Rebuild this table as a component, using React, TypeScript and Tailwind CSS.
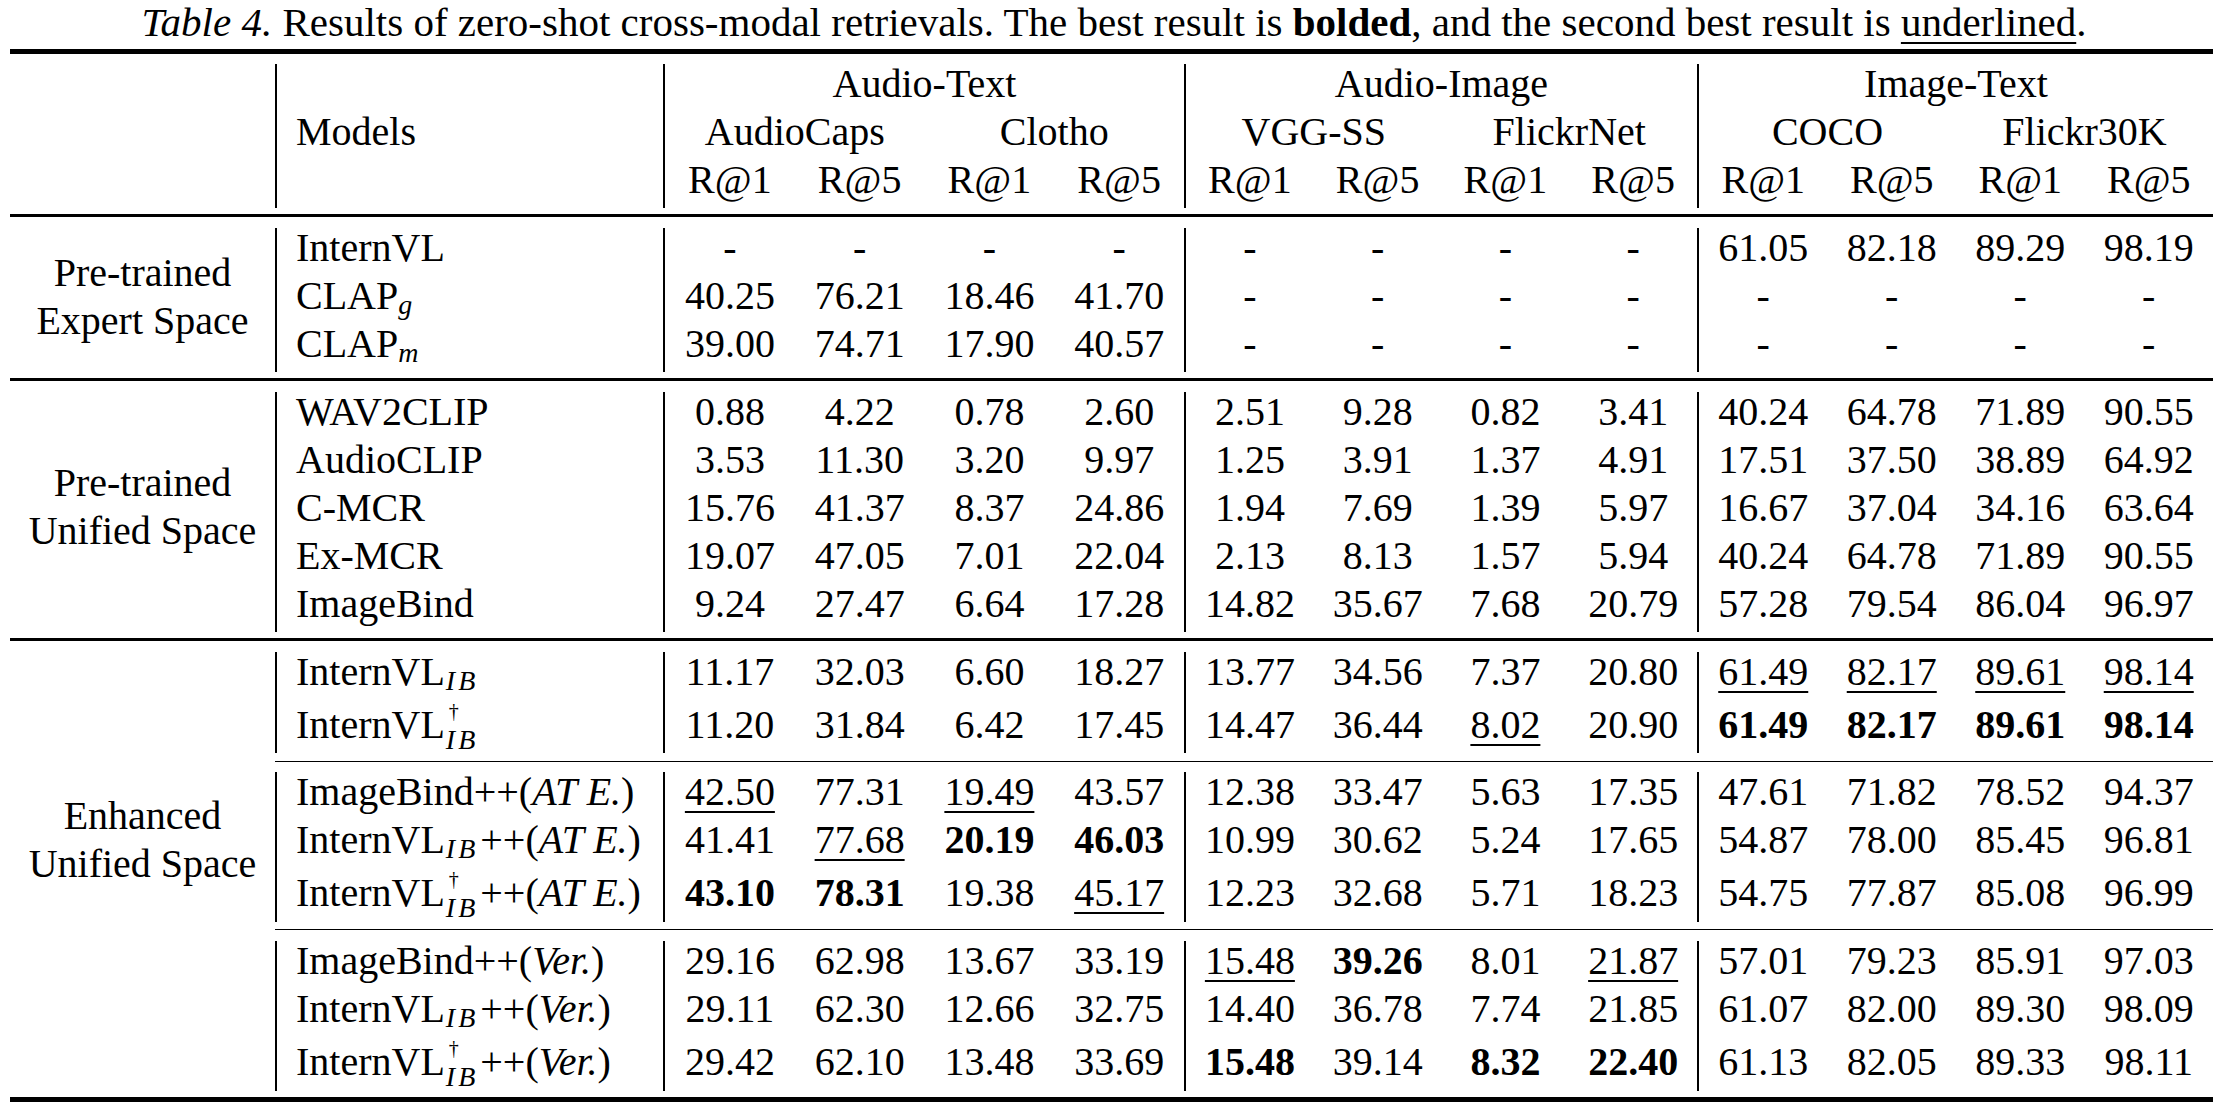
import React from 'react';

// widths of the three metric groups (Audio-Text, Audio-Image, Image-Text)
const groupWidths = ['w-[519px]', 'w-[511px]', 'w-[514px]'];
const gridCols: Record<number, string> = { 1: 'grid-cols-1', 2: 'grid-cols-2', 4: 'grid-cols-4' };

const VLine = () => <div className="w-[2px] shrink-0 self-stretch bg-black" />;

// math-style subscript, optionally with a dagger stacked above it
function Sub({ t, dag }: { t: string; dag?: boolean }) {
  const wide = t === 'IB' ? 'tracking-[3px] pl-[1px] pr-[2px]' : '';
  return (
    <span className={`relative italic text-[28px] ${wide} ${dag ? 'top-[11px]' : 'top-[5px]'}`}>
      {dag && <span className="absolute left-[4px] top-[-23px] not-italic text-[20px] leading-none">†</span>}
      {t}
    </span>
  );
}

function Val({ v }: { v: string }) {
  if (v.startsWith('*')) return <span className="font-bold">{v.slice(1)}</span>;
  if (v.startsWith('_'))
    return <span className="underline decoration-[1.5px] underline-offset-[6px]">{v.slice(1)}</span>;
  return <span>{v}</span>;
}

function Row({
  h,
  pad = '',
  models,
  groups,
}: {
  h: string;
  pad?: string;
  models: React.ReactNode;
  groups: React.ReactNode[][];
}) {
  return (
    <div className={`flex ${h}`}>
      <VLine />
      <div className={`w-[386px] shrink-0 pl-[19px] whitespace-nowrap ${pad}`}>{models}</div>
      {groups.map((g, i) => (
        <React.Fragment key={i}>
          <VLine />
          <div className={`grid shrink-0 ${gridCols[g.length]} ${groupWidths[i]} ${pad}`}>
            {g.map((c, j) => (
              <div key={j} className="text-center whitespace-nowrap">
                {c}
              </div>
            ))}
          </div>
        </React.Fragment>
      ))}
    </div>
  );
}

type DataRow = { name: React.ReactNode; vals: string[]; dag?: boolean };

function DataRows({ rows, dagH = 'h-[54px]' }: { rows: DataRow[]; dagH?: string }) {
  return (
    <div className="flex flex-col">
      {rows.map((r, i) => (
        <Row
          key={i}
          h={r.dag ? dagH : 'h-[48px]'}
          pad={r.dag ? 'pt-[5px]' : ''}
          models={r.name}
          groups={[0, 1, 2].map((g) => r.vals.slice(g * 4, g * 4 + 4).map((v, k) => <Val key={k} v={v} />))}
        />
      ))}
    </div>
  );
}

const D = ['-', '-', '-', '-'];

const expert: DataRow[] = [
  { name: 'InternVL', vals: [...D, ...D, '61.05', '82.18', '89.29', '98.19'] },
  { name: <>CLAP<Sub t="g" /></>, vals: ['40.25', '76.21', '18.46', '41.70', ...D, ...D] },
  { name: <>CLAP<Sub t="m" /></>, vals: ['39.00', '74.71', '17.90', '40.57', ...D, ...D] },
];

const unified: DataRow[] = [
  { name: 'WAV2CLIP', vals: ['0.88', '4.22', '0.78', '2.60', '2.51', '9.28', '0.82', '3.41', '40.24', '64.78', '71.89', '90.55'] },
  { name: 'AudioCLIP', vals: ['3.53', '11.30', '3.20', '9.97', '1.25', '3.91', '1.37', '4.91', '17.51', '37.50', '38.89', '64.92'] },
  { name: 'C-MCR', vals: ['15.76', '41.37', '8.37', '24.86', '1.94', '7.69', '1.39', '5.97', '16.67', '37.04', '34.16', '63.64'] },
  { name: 'Ex-MCR', vals: ['19.07', '47.05', '7.01', '22.04', '2.13', '8.13', '1.57', '5.94', '40.24', '64.78', '71.89', '90.55'] },
  { name: 'ImageBind', vals: ['9.24', '27.47', '6.64', '17.28', '14.82', '35.67', '7.68', '20.79', '57.28', '79.54', '86.04', '96.97'] },
];

const enhancedA: DataRow[] = [
  { name: <>InternVL<Sub t="IB" /></>, vals: ['11.17', '32.03', '6.60', '18.27', '13.77', '34.56', '7.37', '20.80', '_61.49', '_82.17', '_89.61', '_98.14'] },
  { name: <>InternVL<Sub t="IB" dag /></>, dag: true, vals: ['11.20', '31.84', '6.42', '17.45', '14.47', '36.44', '_8.02', '20.90', '*61.49', '*82.17', '*89.61', '*98.14'] },
];

const enhancedB: DataRow[] = [
  { name: <>ImageBind++(<i>AT E.</i>)</>, vals: ['_42.50', '77.31', '_19.49', '43.57', '12.38', '33.47', '5.63', '17.35', '47.61', '71.82', '78.52', '94.37'] },
  { name: <>InternVL<Sub t="IB" />++(<i>AT E.</i>)</>, vals: ['41.41', '_77.68', '*20.19', '*46.03', '10.99', '30.62', '5.24', '17.65', '54.87', '78.00', '85.45', '96.81'] },
  { name: <>InternVL<Sub t="IB" dag />++(<i>AT E.</i>)</>, dag: true, vals: ['*43.10', '*78.31', '19.38', '_45.17', '12.23', '32.68', '5.71', '18.23', '54.75', '77.87', '85.08', '96.99'] },
];

const enhancedC: DataRow[] = [
  { name: <>ImageBind++(<i>Ver.</i>)</>, vals: ['29.16', '62.98', '13.67', '33.19', '_15.48', '*39.26', '8.01', '_21.87', '57.01', '79.23', '85.91', '97.03'] },
  { name: <>InternVL<Sub t="IB" />++(<i>Ver.</i>)</>, vals: ['29.11', '62.30', '12.66', '32.75', '14.40', '36.78', '7.74', '21.85', '61.07', '82.00', '89.30', '98.09'] },
  { name: <>InternVL<Sub t="IB" dag />++(<i>Ver.</i>)</>, dag: true, vals: ['29.42', '62.10', '13.48', '33.69', '*15.48', '39.14', '*8.32', '*22.40', '61.13', '82.05', '89.33', '98.11'] },
];

function Section({ label, labelPad, children }: { label?: string[]; labelPad?: string; children: React.ReactNode }) {
  return (
    <div className="flex">
      <div className={`w-[265px] shrink-0 text-center leading-[48px] whitespace-nowrap ${labelPad ?? ''}`}>
        {label?.map((l) => <div key={l}>{l}</div>)}
      </div>
      <div className="flex flex-col">{children}</div>
    </div>
  );
}

const R = ['R@1', 'R@5', 'R@1', 'R@5'];

export default function App() {
  return (
    <div className="min-h-screen w-[2228px] bg-white text-black font-['Liberation_Serif','Times_New_Roman',serif] text-[40px]">
      {/* Caption */}
      <div className="h-[42px] pt-[2px] text-[41px] leading-[40px] text-center whitespace-nowrap">
        <i>Table 4.</i> Results of zero-shot cross-modal retrievals. The best result is <b>bolded</b>, and the
        second best result is <span className="underline decoration-[1.5px] underline-offset-[6px]">underlined</span>.
      </div>

      <div className="ml-[10px] mt-[7px] flex w-[2203px] flex-col leading-[40px]">
        <div className="h-[5px] bg-black" />

        {/* Header */}
        <div className="mt-[10px]">
          <Section>
            <Row h="h-[48px]" models="" groups={[['Audio-Text'], ['Audio-Image'], ['Image-Text']]} />
            <Row
              h="h-[48px]"
              models="Models"
              groups={[
                ['AudioCaps', 'Clotho'],
                ['VGG-SS', 'FlickrNet'],
                ['COCO', 'Flickr30K'],
              ]}
            />
            <Row h="h-[48px]" models="" groups={[R, R, R]} />
          </Section>
        </div>
        <div className="mt-[6px] h-[3px] bg-black" />

        <div className="mt-[11px]">
          <Section label={['Pre-trained', 'Expert Space']} labelPad="pt-[21px]">
            <DataRows rows={expert} />
          </Section>
        </div>
        <div className="mt-[6px] h-[3px] bg-black" />

        <div className="mt-[11px]">
          <Section label={['Pre-trained', 'Unified Space']} labelPad="pt-[67px]">
            <DataRows rows={unified} />
          </Section>
        </div>
        <div className="mt-[6px] h-[3px] bg-black" />

        <div className="mt-[11px]">
          <Section label={['Enhanced', 'Unified Space']} labelPad="pt-[140px]">
            <DataRows rows={enhancedA} dagH="h-[53px]" />
            <div className="mt-[8px] h-px bg-black" />
            <div className="mt-[10px]">
              <DataRows rows={enhancedB} />
            </div>
            <div className="mt-[7px] h-px bg-black" />
            <div className="mt-[11px]">
              <DataRows rows={enhancedC} />
            </div>
          </Section>
        </div>
        <div className="mt-[6px] h-[5px] bg-black" />
      </div>
    </div>
  );
}
